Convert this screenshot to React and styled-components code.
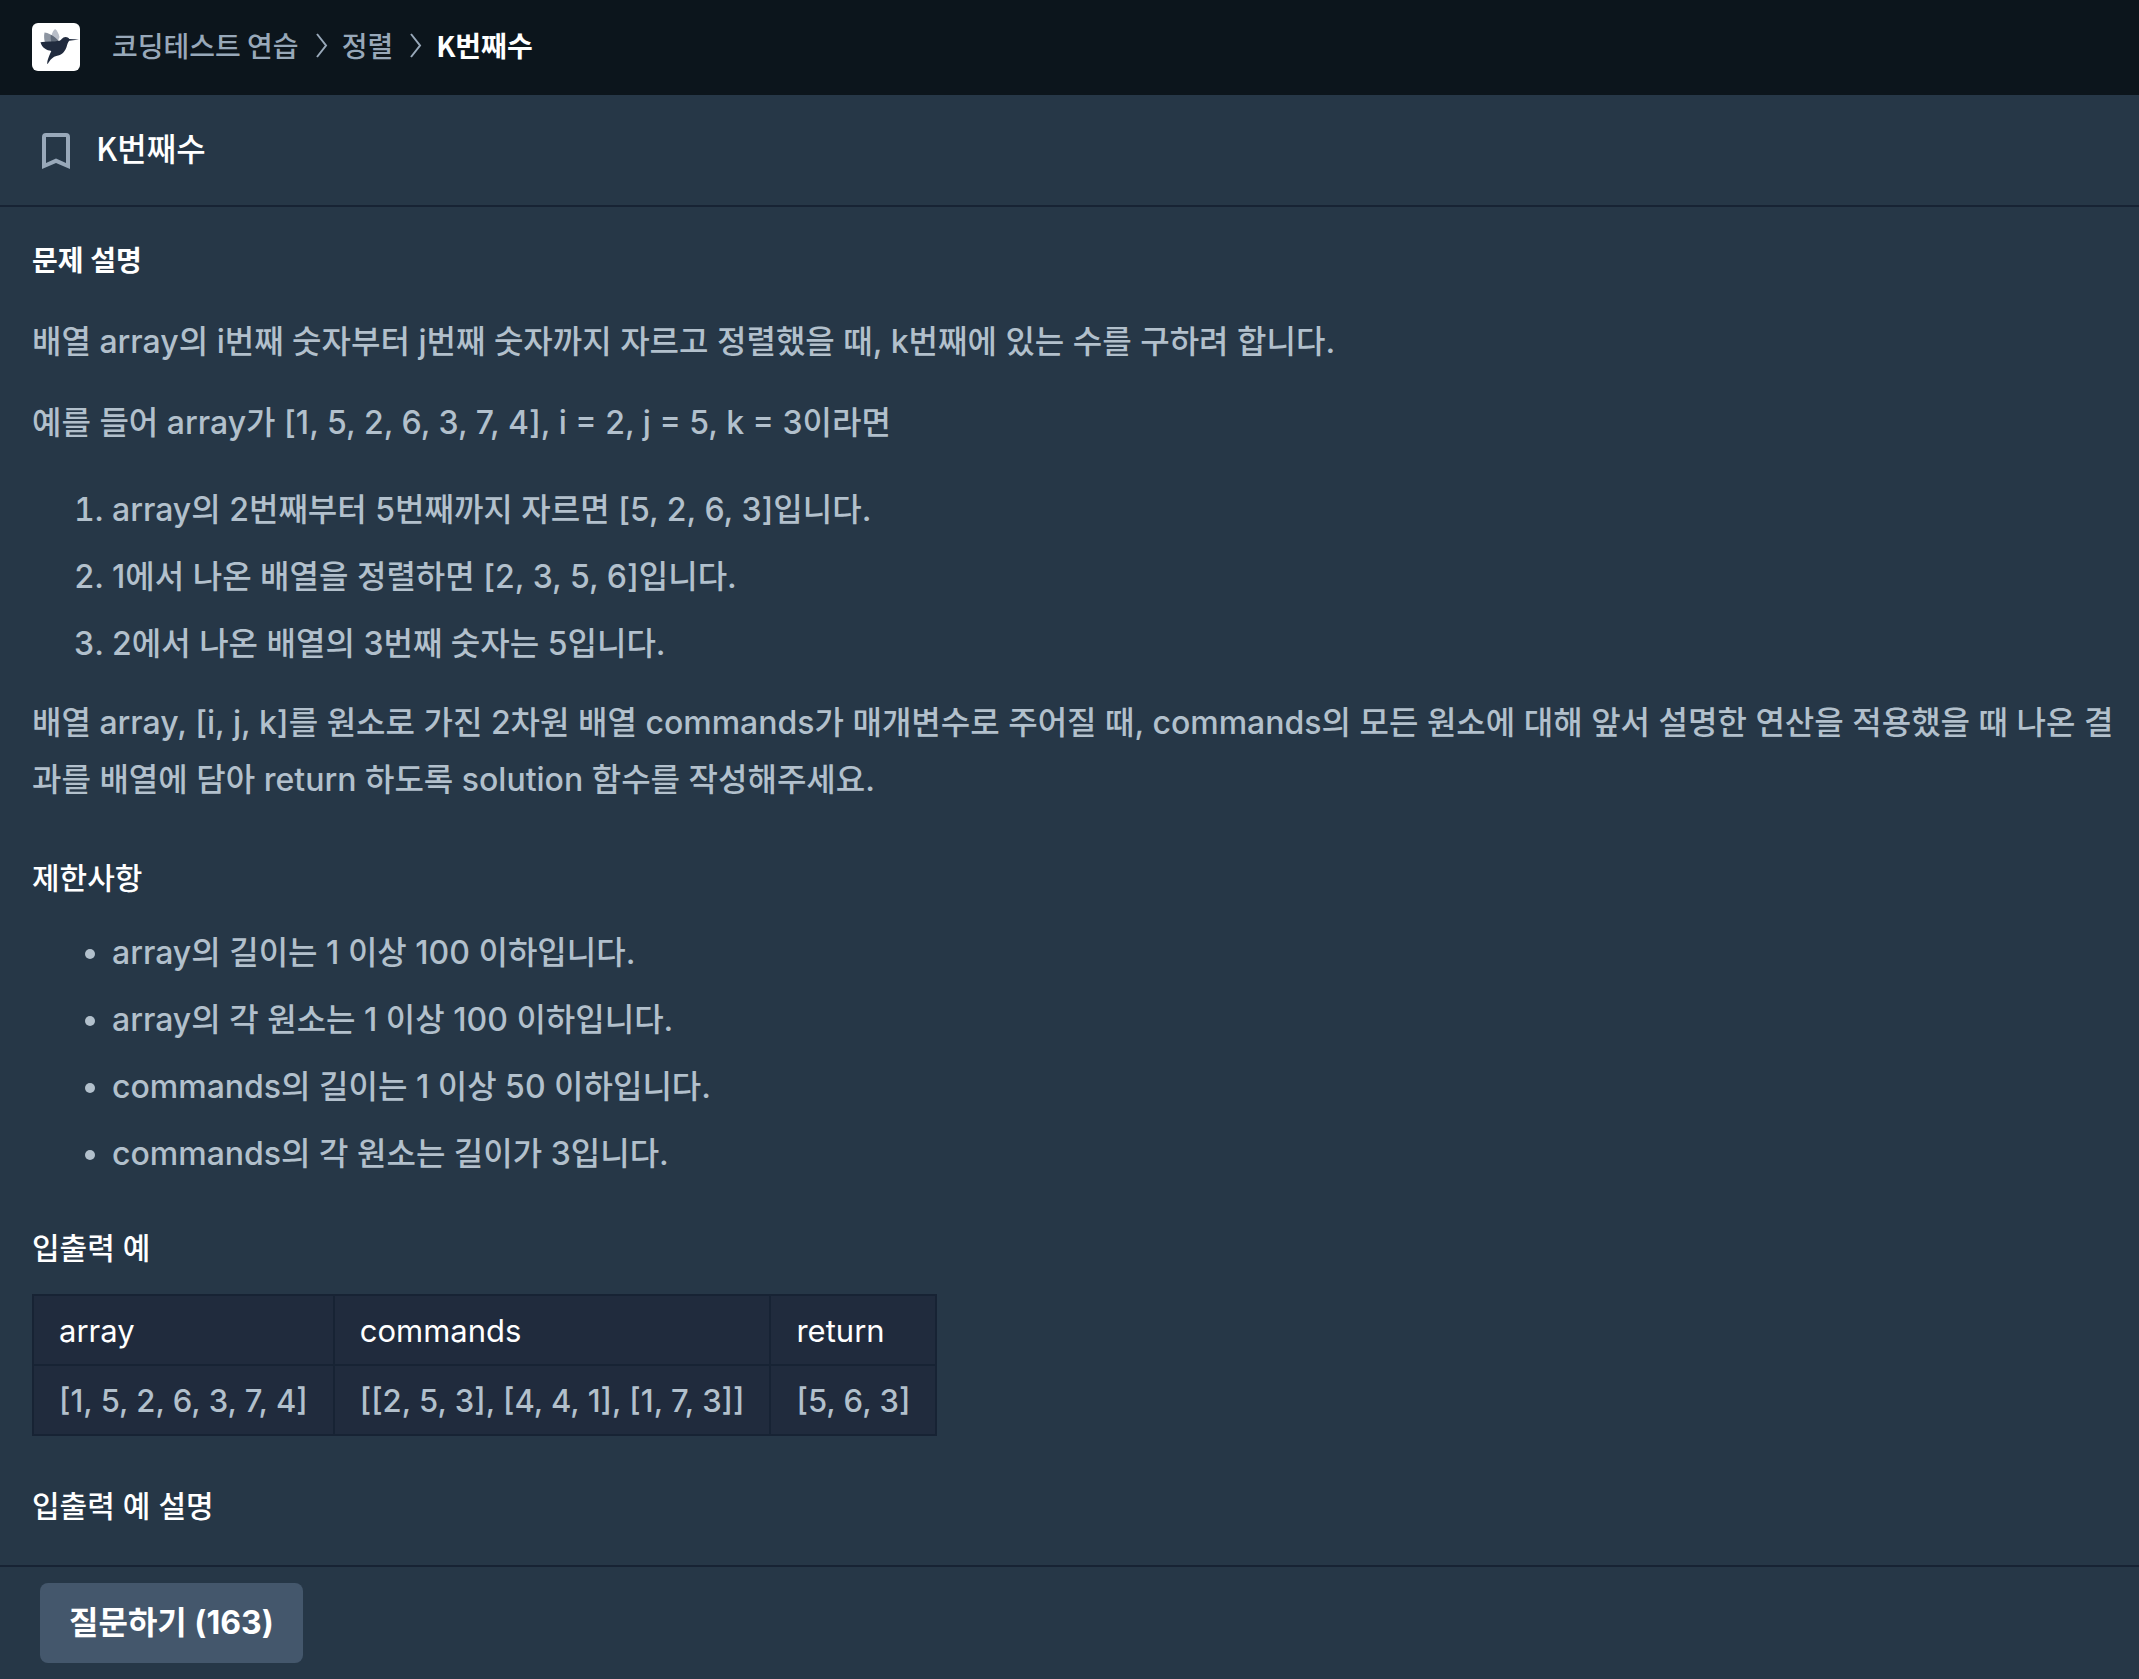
/*
 *
 * Coding test problem page
 *
 */

import React from 'react';
import styled, { createGlobalStyle } from 'styled-components';

const GlobalStyle = createGlobalStyle`
  * {
    box-sizing: border-box;
  }

  body {
    margin: 0;
    background: #263747;
    color: #b2c0cc;
    font-family: Inter, 'Noto Sans CJK KR', sans-serif;
    font-size: 32px;
    font-weight: 500;
    line-height: 57px;
  }
`;

const Page = styled.div`
  display: flex;
  flex-direction: column;
  min-height: 100vh;
`;

const Header = styled.header`
  display: flex;
  align-items: center;
  height: 95px;
  padding: 0 32px 2px;
  background: #0c151c;
`;

const LogoLink = styled.a`
  display: flex;
  width: 48px;
  height: 48px;
  margin-right: 32px;
  border-radius: 6px;
  background: #ffffff;
`;

const Breadcrumb = styled.ol`
  display: flex;
  align-items: center;
  margin: 0;
  padding: 0 0 4px;
  list-style: none;
  font-family: 'Noto Sans CJK KR', sans-serif;
  font-size: 28px;
  line-height: 42px;
`;

const Crumb = styled.li`
  display: flex;
  align-items: center;
  color: ${props => (props.$current ? '#ffffff' : '#98a8b9')};
  font-weight: ${props => (props.$current ? 700 : 500)};
`;

const CrumbLink = styled.a`
  color: inherit;
  text-decoration: none;
`;

const Separator = styled.svg`
  width: 12px;
  height: 26px;
  margin: 0 14px 0 17px;
  fill: none;
  stroke: #98a8b9;
  stroke-width: 2;
`;

const TitleBar = styled.div`
  display: flex;
  align-items: center;
  height: 112px;
  padding: 0 32px;
  border-bottom: 2px solid #172334;
`;

const BookmarkButton = styled.button`
  display: flex;
  width: 48px;
  height: 48px;
  margin-right: 16px;
  padding: 0;
  border: 0;
  background: none;
  cursor: pointer;
`;

const Title = styled.h1`
  margin: 0;
  padding-bottom: 6px;
  color: #ffffff;
  font-family: 'Noto Sans CJK KR', sans-serif;
  font-size: 32px;
  font-weight: 500;
  line-height: 48px;
`;

const Main = styled.main`
  flex: 1;
  padding: 34px 12px 12px 32px;
`;

const GuideTitle = styled.h6`
  margin: 0 0 32px;
  color: #ffffff;
  font-size: 28px;
  font-weight: 700;
  line-height: 40px;
`;

const Paragraph = styled.p`
  margin: 0 0 24px;
`;

const SectionTitle = styled.h5`
  margin: 46px 0 26px;
  color: #ffffff;
  font-size: 30px;
  font-weight: 500;
  line-height: 40px;

  ${Paragraph} + & {
    margin-top: 50px;
  }
`;

const NumberList = styled.ol`
  margin: 30px 0 22px;
  padding-left: 80px;
`;

const BulletList = styled.ul`
  margin: 0;
  padding-left: 80px;
`;

const Item = styled.li`
  & + & {
    margin-top: 10px;
  }
`;

const Table = styled.table`
  margin-bottom: 50px;
  border-collapse: collapse;
  background: #202b3d;
  font-size: 31px;
`;

const HeadCell = styled.th`
  padding: 6px 25px 5px;
  border: 2px solid #172334;
  color: #ffffff;
  font-weight: 400;
  text-align: left;
`;

const Cell = styled.td`
  padding: 6px 25px 5px;
  border: 2px solid #172334;
`;

const Footer = styled.footer`
  padding: 16px 40px;
  border-top: 2px solid #172334;
`;

const QuestionButton = styled.button`
  display: block;
  height: 80px;
  padding: 0 29px;
  border: 0;
  border-radius: 8px;
  background: #44576c;
  color: #ffffff;
  font-family: inherit;
  font-size: 32px;
  font-weight: 700;
  line-height: 48px;
  cursor: pointer;
`;

const steps = [
  'array의 2번째부터 5번째까지 자르면 [5, 2, 6, 3]입니다.',
  '1에서 나온 배열을 정렬하면 [2, 3, 5, 6]입니다.',
  '2에서 나온 배열의 3번째 숫자는 5입니다.',
];

const limits = [
  'array의 길이는 1 이상 100 이하입니다.',
  'array의 각 원소는 1 이상 100 이하입니다.',
  'commands의 길이는 1 이상 50 이하입니다.',
  'commands의 각 원소는 길이가 3입니다.',
];

const columns = ['array', 'commands', 'return'];

const rows = [
  ['[1, 5, 2, 6, 3, 7, 4]', '[[2, 5, 3], [4, 4, 1], [1, 7, 3]]', '[5, 6, 3]'],
];

const BirdLogo = () => (
  <svg width="48" height="48" viewBox="0 0 48 48" aria-hidden="true">
    <path
      fill="#b9bec8"
      d="M19.5 12.5c.8-3 2-5.500 3.600-6.500 1.900 1.300 3.400 4.300 4.400 8l-1.700 4.300-6.800-2z"
    />
    <path fill="#8d95a1" d="M12.500 9.500c3.500.3 7.500 2.500 11 5.500l3 3-13.500 1.400c-1-3.400-1.200-6.600-.5-9.900z" />
    <path fill="#5f6978" d="M18.800 11.800c3 1.500 5.700 3.800 7.800 6.300l-7.300.8c-.7-2.500-.8-4.800-.5-7.100z" />
    <path
      fill="#212b3e"
      d="M8.500 19.300c6-1 12.500-.4 19-1.500 1.800-.3 2.600-3.700 6.200-3.800 1.600 0 2.600.7 3.600 1.900l9.700.7-9.800 1.100c-1 1.200-1.600 2.600-2.200 4.700-1.500 5.200-4.300 9.300-9.800 10.300-4.500 1-7 4-9.700 8.600-.8-2 .6-6.500 3.800-13.300-4.300-.7-9.300-2.700-10.800-8.700z"
    />
  </svg>
);

const BookmarkIcon = () => (
  <svg width="48" height="48" viewBox="0 0 48 48" aria-hidden="true">
    <path
      fill="#98a8b9"
      fillRule="evenodd"
      d="M14 7h20a4 4 0 0 1 4 4v32l-14-6-14 6V11a4 4 0 0 1 4-4zm0 4v26l10-4.500 10 4.500V11z"
    />
  </svg>
);

const Chevron = () => (
  <Separator viewBox="0 0 12 26" aria-hidden="true">
    <path d="M1 2l9 11.500-9 11.500" />
  </Separator>
);

const App = () => (
  <Page>
    <GlobalStyle />
    <Header>
      <LogoLink href="#home" aria-label="홈">
        <BirdLogo />
      </LogoLink>
      <nav>
        <Breadcrumb>
          <Crumb>
            <CrumbLink href="#challenges">코딩테스트 연습</CrumbLink>
            <Chevron />
          </Crumb>
          <Crumb>
            <CrumbLink href="#sort">정렬</CrumbLink>
            <Chevron />
          </Crumb>
          <Crumb $current>K번째수</Crumb>
        </Breadcrumb>
      </nav>
    </Header>
    <TitleBar>
      <BookmarkButton type="button" aria-label="북마크">
        <BookmarkIcon />
      </BookmarkButton>
      <Title>K번째수</Title>
    </TitleBar>
    <Main>
      <GuideTitle>문제 설명</GuideTitle>
      <Paragraph>
        배열 array의 i번째 숫자부터 j번째 숫자까지 자르고 정렬했을 때, k번째에 있는 수를 구하려
        합니다.
      </Paragraph>
      <Paragraph>예를 들어 array가 [1, 5, 2, 6, 3, 7, 4], i = 2, j = 5, k = 3이라면</Paragraph>
      <NumberList>
        {steps.map(step => (
          <Item key={step}>{step}</Item>
        ))}
      </NumberList>
      <Paragraph>
        배열 array, [i, j, k]를 원소로 가진 2차원 배열 commands가 매개변수로 주어질 때, commands의
        모든 원소에 대해 앞서 설명한 연산을 적용했을 때 나온 결과를 배열에 담아 return 하도록
        solution 함수를 작성해주세요.
      </Paragraph>
      <SectionTitle>제한사항</SectionTitle>
      <BulletList>
        {limits.map(limit => (
          <Item key={limit}>{limit}</Item>
        ))}
      </BulletList>
      <SectionTitle>입출력 예</SectionTitle>
      <Table>
        <thead>
          <tr>
            {columns.map(column => (
              <HeadCell key={column} scope="col">
                {column}
              </HeadCell>
            ))}
          </tr>
        </thead>
        <tbody>
          {rows.map(row => (
            <tr key={row[0]}>
              {row.map(value => (
                <Cell key={value}>{value}</Cell>
              ))}
            </tr>
          ))}
        </tbody>
      </Table>
      <SectionTitle>입출력 예 설명</SectionTitle>
    </Main>
    <Footer>
      <QuestionButton type="button">질문하기 (163)</QuestionButton>
    </Footer>
  </Page>
);

export default App;
